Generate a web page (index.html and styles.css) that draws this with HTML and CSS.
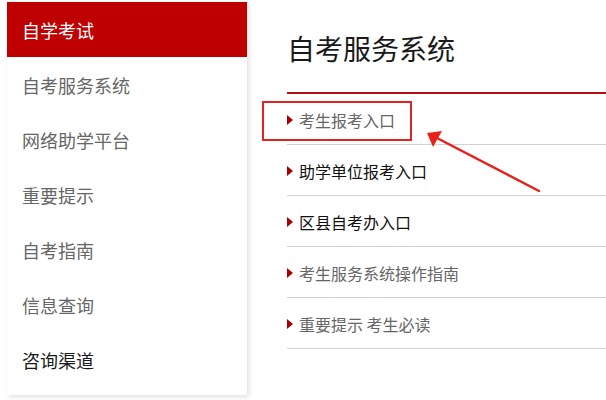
FILE: index.html
```html
<!DOCTYPE html>
<html lang="zh-CN">
<head>
<meta charset="utf-8">
<title>自考服务系统</title>
<link rel="stylesheet" href="styles.css">
</head>
<body>
<div class="page">
  <nav class="sidebar">
    <div class="side-head">自学考试</div>
    <div class="side-item">自考服务系统</div>
    <div class="side-item">网络助学平台</div>
    <div class="side-item">重要提示</div>
    <div class="side-item">自考指南</div>
    <div class="side-item">信息查询</div>
    <div class="side-item dark">咨询渠道</div>
  </nav>
  <main class="main">
    <h1 class="title">自考服务系统</h1>
    <ul class="list">
      <li class="row gray"><span class="tri"></span>考生报考入口</li>
      <li class="row"><span class="tri"></span>助学单位报考入口</li>
      <li class="row"><span class="tri"></span>区县自考办入口</li>
      <li class="row gray"><span class="tri"></span>考生服务系统操作指南</li>
      <li class="row gray"><span class="tri"></span>重要提示 考生必读</li>
    </ul>
  </main>
</div>
<div class="highlight"></div>
<svg class="arrow" width="606" height="400" viewBox="0 0 606 400">
  <line x1="539" y1="191" x2="435" y2="137" stroke="#e8201c" stroke-width="2.5" stroke-linecap="round"/>
  <polygon points="427,133 442,131 433,147" fill="#e8201c"/>
</svg>
</body>
</html>
```
FILE: styles.css
```css
html, body {
  margin: 0;
  padding: 0;
  background: #fff;
}
body {
  font-family: "Noto Sans CJK SC", "Noto Sans", sans-serif;
  width: 606px;
  height: 400px;
  overflow: hidden;
  position: relative;
}
.page {
  display: flex;
  align-items: flex-start;
}
.sidebar {
  margin: 2px 0 0 7px;
  width: 240px;
  padding-bottom: 8px;
  background: #fff;
  box-shadow: 2px 2px 5px rgba(0, 0, 0, 0.12);
  flex-shrink: 0;
}
.side-head,
.side-item {
  height: 55px;
  display: flex;
  align-items: center;
  padding-left: 15px;
  font-size: 18px;
  line-height: 1;
}
.side-head {
  background: #bf0000;
  color: #fff;
}
.side-item {
  color: #666;
}
.side-item.dark {
  color: #1a1a1a;
}
.main {
  flex: 1;
  margin-left: 40px;
}
.title {
  margin: 0;
  padding: 34px 0 30px;
  font-size: 28px;
  line-height: 28px;
  font-weight: normal;
  color: #1a1a1a;
  border-bottom: 2px solid #b50e0e;
}
.list {
  list-style: none;
  margin: 0;
  padding: 0;
}
.row {
  height: 48px;
  padding-top: 2px;
  border-bottom: 1px solid #d2d2d2;
  display: flex;
  align-items: center;
  font-size: 16px;
  line-height: 1;
  color: #111;
}
.row.gray {
  color: #666;
}
.tri {
  width: 0;
  height: 0;
  border-top: 5px solid transparent;
  border-bottom: 5px solid transparent;
  border-left: 6px solid #a80000;
  margin-right: 6px;
}
.highlight {
  position: absolute;
  left: 262px;
  top: 101px;
  width: 146px;
  height: 36px;
  border: 2px solid #e42222;
}
.arrow {
  position: absolute;
  left: 0;
  top: 0;
  pointer-events: none;
}
```
